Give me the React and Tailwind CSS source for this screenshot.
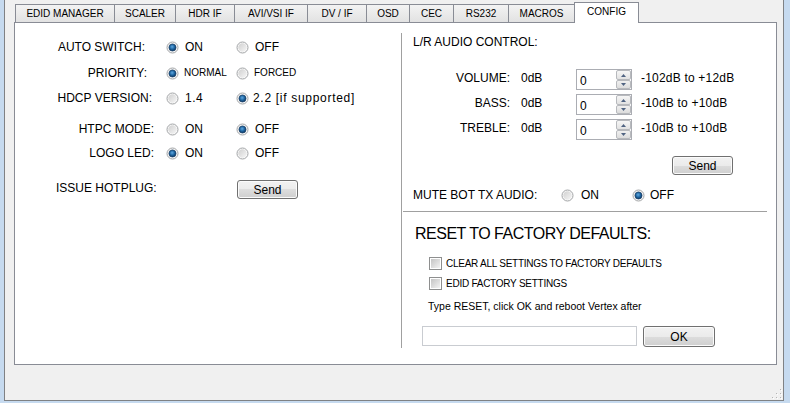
import React from "react";

function Radio({ checked }) {
  return (
    <svg width="13" height="13" viewBox="0 0 13 13" className="shrink-0">
      <defs>
        <linearGradient id="ruG" x1="0" y1="0" x2="1" y2="1">
          <stop offset="0%" stopColor="#d0d0d0" />
          <stop offset="100%" stopColor="#f6f6f6" />
        </linearGradient>
        <radialGradient id="rcG" cx="45%" cy="40%" r="60%">
          <stop offset="0%" stopColor="#62a9e0" />
          <stop offset="55%" stopColor="#1f67a3" />
          <stop offset="100%" stopColor="#0e3660" />
        </radialGradient>
      </defs>
      <circle cx="6.5" cy="6.5" r="5.5" fill="#fafafa" stroke="#a2a4a6" strokeWidth="1" />
      <circle cx="6.5" cy="6.5" r="4.2" fill="url(#ruG)" />
      {checked && <circle cx="6.5" cy="6.5" r="3.5" fill="url(#rcG)" stroke="#173f68" strokeWidth="0.7" />}
    </svg>
  );
}

function Check() {
  return (
    <div className="w-[13px] h-[13px] border border-[#8e8f8f] bg-white p-[1px] shrink-0">
      <div className="w-full h-full bg-[linear-gradient(135deg,#c4c4c4,#f3f3f3)]" />
    </div>
  );
}

function Button({ w, h, children }) {
  return (
    <div
      className={`${w} ${h} border border-[#707070] rounded-[3px] bg-[linear-gradient(to_bottom,#f2f2f2_0%,#ebebeb_50%,#dddddd_50%,#cfcfcf_100%)] flex items-center justify-center text-[12px] leading-[14px] shadow-[inset_0_0_0_1px_#fbfbfb]`}
    >
      {children}
    </div>
  );
}

function Spin() {
  return (
    <div className="w-[56px] h-[21px] border border-[#abadb3] bg-white flex shrink-0">
      <div className="flex-1 pl-[3px] pt-[4px] text-[12px] leading-[14px]">0</div>
      <div className="w-[15px] flex flex-col">
        <div className="h-[10px] border border-[#b7b9bd] rounded-[2px] bg-[linear-gradient(to_bottom,#f6f6f6,#e2e2e2)] flex items-center justify-center">
          <svg width="5" height="3" viewBox="0 0 5 3">
            <path d="M0 3 L2.5 0 L5 3 Z" fill="#4f6382" />
          </svg>
        </div>
        <div className="h-[9px] border border-[#b7b9bd] rounded-[2px] bg-[linear-gradient(to_bottom,#f0f0f0,#dcdcdc)] flex items-center justify-center">
          <svg width="5" height="3" viewBox="0 0 5 3">
            <path d="M0 0 L2.5 3 L5 0 Z" fill="#4f6382" />
          </svg>
        </div>
      </div>
    </div>
  );
}

const tabs = [
  ["EDID MANAGER", "w-[99px]"],
  ["SCALER", "w-[61px]"],
  ["HDR IF", "w-[59px]"],
  ["AVI/VSI IF", "w-[73px]"],
  ["DV / IF", "w-[59px]"],
  ["OSD", "w-[43px]"],
  ["CEC", "w-[44px]"],
  ["RS232", "w-[55px]"],
  ["MACROS", "w-[66px]"],
];

function Opt({ checked, gap, w, small, extra, children }) {
  return (
    <div className={`flex items-center ${gap} ${w || ""}`}>
      <Radio checked={checked} />
      <span className={`${small ? "text-[10px] leading-[12px]" : "text-[12px] leading-[14px]"} ${extra || ""}`}>{children}</span>
    </div>
  );
}

function LRow({ mt, pr, label, a, b }) {
  return (
    <div className={`flex items-center h-[14px] ${mt}`}>
      <div className={`w-[140px] text-right ${pr} text-[12px] leading-[14px]`}>{label}</div>
      <div className="ml-[11px] w-[70px]">{a}</div>
      <div>{b}</div>
    </div>
  );
}

function SRow({ mt, label, val, range }) {
  return (
    <div className={`flex h-[21px] ${mt}`}>
      <div className="w-[108px] text-right pt-[2px] text-[12px] leading-[14px]">{label}</div>
      <div className="ml-[11px] w-[55px] pt-[2px] text-[12px] leading-[14px]">{val}</div>
      <Spin />
      <div className="ml-[9px] pt-[2px] text-[12px] leading-[14px] tracking-[0.2px]">{range}</div>
    </div>
  );
}

export default function App() {
  return (
    <div className="w-[790px] h-[403px] flex bg-[#c6daef] font-['Liberation_Sans',Arial,sans-serif] text-black overflow-hidden">
      <div className="ml-[4px] w-[780px] h-[401px] bg-[#f0f0f0] border-l border-r border-b border-[#7f8184] relative">
        <div className="ml-[9px] mt-[2px] w-[763px]">
          {/* tab strip */}
          <div className="flex items-end h-[20px] pl-[1px]">
            {tabs.map(([t, w]) => (
              <div
                key={t}
                className={`${w} h-[18px] border-l border-t border-[#898c95] bg-[linear-gradient(to_bottom,#f3f3f3,#e2e2e2)] flex justify-center pt-[3px] text-[10px] leading-[12px]`}
              >
                {t}
              </div>
            ))}
            <div className="w-[65px] h-[21px] -mb-[1px] relative z-10 border-l border-t border-r border-[#898c95] bg-white flex justify-center pt-[3px] text-[10px] leading-[12px]">
              CONFIG
            </div>
          </div>
          {/* panel */}
          <div className="h-[343px] border border-[#898c95] bg-white flex">
            {/* left column */}
            <div className="w-[386px] flex flex-col">
              <LRow
                mt="mt-[17px]"
                pr="pr-[10px]"
                label="AUTO SWITCH:"
                a={<Opt checked gap="gap-[6px]">ON</Opt>}
                b={<Opt gap="gap-[6px]">OFF</Opt>}
              />
              <LRow
                mt="mt-[12px]"
                pr="pr-[8px]"
                label="PRIORITY:"
                a={<Opt checked small gap="gap-[5px]">NORMAL</Opt>}
                b={<Opt small gap="gap-[5px]">FORCED</Opt>}
              />
              <LRow
                mt="mt-[11px]"
                pr="pr-[3px]"
                label="HDCP VERSION:"
                a={<Opt gap="gap-[6px]" extra="tracking-[0.5px]">1.4</Opt>}
                b={<Opt checked gap="gap-[4px]" extra="tracking-[0.7px]">2.2 [if supported]</Opt>}
              />
              <LRow
                mt="mt-[17px]"
                pr="pr-[1px]"
                label="HTPC MODE:"
                a={<Opt gap="gap-[6px]">ON</Opt>}
                b={<Opt checked gap="gap-[6px]">OFF</Opt>}
              />
              <LRow
                mt="mt-[10px]"
                pr="pr-[1px]"
                label="LOGO LED:"
                a={<Opt checked gap="gap-[6px]">ON</Opt>}
                b={<Opt gap="gap-[6px]">OFF</Opt>}
              />
              <div className="flex items-center h-[19px] mt-[20px]">
                <div className="ml-[41px] w-[181px] pb-[4px] text-[12px] leading-[14px]">ISSUE HOTPLUG:</div>
                <Button w="w-[61px]" h="h-[19px]">Send</Button>
              </div>
            </div>
            {/* right column */}
            <div className="w-[366px] h-[315px] mt-[10px] border-l border-[#a0a0a0] flex flex-col">
              <div className="pl-[11px] mt-[2px] text-[12px] leading-[14px]">L/R AUDIO CONTROL:</div>
              <SRow mt="mt-[20px]" label="VOLUME:" val="0dB" range="-102dB to +12dB" />
              <SRow mt="mt-[4px]" label="BASS:" val="0dB" range="-10dB to +10dB" />
              <SRow mt="mt-[4px]" label="TREBLE:" val="0dB" range="-10dB to +10dB" />
              <div className="ml-[270px] mt-[16px]">
                <Button w="w-[61px]" h="h-[19px]">Send</Button>
              </div>
              <div className="flex items-center h-[14px] mt-[13px]">
                <div className="pl-[11px] w-[159px] text-[12px] leading-[14px]">MUTE BOT TX AUDIO:</div>
                <div className="w-[71px]">
                  <Opt gap="gap-[7px]">ON</Opt>
                </div>
                <Opt checked gap="gap-[5px]">OFF</Opt>
              </div>
              <div className="mt-[9px] ml-[1px] border-t border-[#a0a0a0]" />
              <div className="mt-[12px] pl-[13px] text-[16px] leading-[19px] tracking-[-0.5px]">
                RESET TO FACTORY DEFAULTS:
              </div>
              <div className="mt-[14px] ml-[27px] h-[13px] flex items-center gap-[4px]">
                <Check />
                <span className="text-[10px] leading-[12px] tracking-[-0.25px]">CLEAR ALL SETTINGS TO FACTORY DEFAULTS</span>
              </div>
              <div className="mt-[7px] ml-[27px] h-[13px] flex items-center gap-[4px]">
                <Check />
                <span className="text-[10px] leading-[12px] tracking-[-0.25px]">EDID FACTORY SETTINGS</span>
              </div>
              <div className="mt-[10px] pl-[26px] text-[10.5px] leading-[13px]">
                Type RESET, click OK and reboot Vertex after
              </div>
              <div className="mt-[13px] flex">
                <div className="ml-[20px] w-[215px] h-[20px] border border-[#c9ccd1] bg-white" />
                <div className="ml-[6px]">
                  <Button w="w-[72px]" h="h-[21px]">OK</Button>
                </div>
              </div>
            </div>
          </div>
        </div>
        {/* size grip */}
        <svg className="absolute right-[1px] bottom-[1px]" width="11" height="11" viewBox="0 0 11 11">
          {[
            [9, 1], [9, 5], [5, 5], [9, 9], [5, 9], [1, 9],
          ].map(([x, y]) => (
            <g key={`${x}-${y}`}>
              <rect x={x} y={y} width="1" height="1" fill="#b5b5b5" />
              <rect x={x + 1} y={y + 1} width="1" height="1" fill="#ffffff" />
            </g>
          ))}
        </svg>
      </div>
    </div>
  );
}
